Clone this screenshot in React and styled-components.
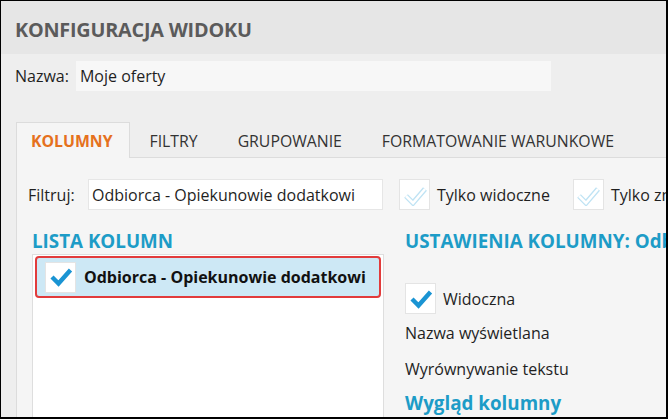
import React from "react";
import styled, { createGlobalStyle } from "styled-components";

const GlobalStyle = createGlobalStyle`
  html, body {
    margin: 0;
    padding: 0;
    background: #ffffff;
  }
  * {
    box-sizing: border-box;
  }
`;

const tabs = ["KOLUMNY", "FILTRY", "GRUPOWANIE", "FORMATOWANIE WARUNKOWE"];

const CheckMark = ({ faded }) => (
  <svg width="24" height="22" viewBox="0 0 24 22">
    {faded ? (
      <>
        <path d="M3 12 L10 19 L22 5" fill="none" stroke="#bfe3f4" strokeWidth="5.2" strokeLinejoin="miter" />
        <path d="M3 12 L10 19 L22 5" fill="none" stroke="#ffffff" strokeWidth="2.6" strokeLinejoin="miter" />
      </>
    ) : (
      <path d="M3 11 L9.5 17.5 L21.5 4" fill="none" stroke="#1a94d3" strokeWidth="4.4" strokeLinejoin="miter" />
    )}
  </svg>
);

const App = () => {
  return (
    <Frame>
      <GlobalStyle />
      <Header>
        <Title>KONFIGURACJA WIDOKU</Title>
      </Header>
      <Body>
        <NameRow>
          <Label>Nazwa:</Label>
          <NameInput>Moje oferty</NameInput>
        </NameRow>
        <TabStrip>
          {tabs.map((t, i) => (
            <Tab key={t} active={i === 0}>
              {t}
            </Tab>
          ))}
        </TabStrip>
        <Panel>
          <FilterRow>
            <FilterLabel>Filtruj:</FilterLabel>
            <FilterInput>Odbiorca - Opiekunowie dodatkowi</FilterInput>
            <CheckOption>
              <Box>
                <CheckMark faded />
              </Box>
              Tylko widoczne
            </CheckOption>
            <CheckOption>
              <Box>
                <CheckMark faded />
              </Box>
              Tylko zmienione
            </CheckOption>
          </FilterRow>
          <Columns>
            <LeftCol>
              <SectionTitle>LISTA KOLUMN</SectionTitle>
              <ListBox>
                <ListItem>
                  <Box>
                    <CheckMark />
                  </Box>
                  <ItemText>Odbiorca - Opiekunowie dodatkowi</ItemText>
                </ListItem>
              </ListBox>
            </LeftCol>
            <RightCol>
              <SectionTitle>USTAWIENIA KOLUMNY: Odbiorca</SectionTitle>
              <VisibleRow>
                <Box>
                  <CheckMark />
                </Box>
                Widoczna
              </VisibleRow>
              <FieldRow>
                <FieldLabel>Nazwa wyświetlana</FieldLabel>
                <FieldInput />
              </FieldRow>
              <FieldRow>
                <FieldLabel>Wyrównywanie tekstu</FieldLabel>
                <FieldInput />
              </FieldRow>
              <SubTitle>Wygląd kolumny</SubTitle>
            </RightCol>
          </Columns>
        </Panel>
      </Body>
    </Frame>
  );
};

const Frame = styled.div`
  width: 668px;
  height: 419px;
  overflow: hidden;
  border: 1px solid #000;
  border-right-width: 2px;
  border-bottom-width: 2px;
  background: #eeeeee;
  font-family: "Open Sans", "Noto Sans", sans-serif;
  color: #1f1f1f;
  display: flex;
  flex-direction: column;
`;

const Header = styled.div`
  height: 53px;
  flex-shrink: 0;
  background: #e6e6e6;
  display: flex;
  align-items: center;
  padding: 3px 0 0 14px;
`;

const Title = styled.h1`
  margin: 0;
  font-size: 19.8px;
  font-weight: 700;
  color: #5b5b5b;
  letter-spacing: -0.2px;
`;

const Body = styled.div`
  flex: 1;
  padding: 7px 0 0 14px;
  display: flex;
  flex-direction: column;
  min-height: 0;
`;

const NameRow = styled.div`
  display: flex;
  align-items: center;
  gap: 7px;
`;

const Label = styled.span`
  font-size: 16px;
  white-space: nowrap;
`;

const NameInput = styled.div`
  width: 475px;
  height: 30px;
  background: #f7f7f7;
  display: flex;
  align-items: center;
  padding-left: 4px;
  font-size: 16px;
`;

const TabStrip = styled.div`
  display: flex;
  align-items: flex-end;
  margin-top: 31px;
  padding-left: 1px;
`;

const Tab = styled.div`
  height: 36px;
  display: flex;
  align-items: center;
  padding: 0 19px 0 19px;
  padding-left: ${(p) => (p.active ? "14px" : "19px")};
  padding-right: ${(p) => (p.active ? "16px" : "19px")};
  font-size: 15.8px;
  white-space: nowrap;
  color: ${(p) => (p.active ? "#e5711d" : "#333")};
  font-weight: ${(p) => (p.active ? 700 : 400)};
  background: ${(p) => (p.active ? "#f5f5f5" : "transparent")};
  border: 1px solid ${(p) => (p.active ? "#dcdcdc" : "transparent")};
  border-bottom: none;
  margin-bottom: -1px;
  position: relative;
  z-index: 1;
`;

const Panel = styled.div`
  flex: 1;
  margin-left: 1px;
  background: #f5f5f5;
  border-top: 1px solid #dcdcdc;
  border-left: 1px solid #dcdcdc;
  padding: 21px 0 0 11px;
  min-height: 0;
  overflow: hidden;
`;

const FilterRow = styled.div`
  display: flex;
  align-items: center;
  white-space: nowrap;
`;

const FilterLabel = styled.span`
  width: 60px;
  flex-shrink: 0;
  font-size: 16px;
`;

const FilterInput = styled.div`
  width: 295px;
  height: 31px;
  flex-shrink: 0;
  background: #fff;
  border: 1px solid #e6e6e6;
  display: flex;
  align-items: center;
  padding-left: 3px;
  font-size: 16px;
`;

const CheckOption = styled.label`
  display: flex;
  align-items: center;
  gap: 7px;
  font-size: 16px;
  margin-left: 16px;
  margin-right: 7px;
  flex-shrink: 0;
`;

const Box = styled.span`
  width: 31px;
  height: 31px;
  flex-shrink: 0;
  background: #fff;
  border: 1px solid #e4e4e4;
  display: flex;
  align-items: center;
  justify-content: center;
`;

const Columns = styled.div`
  display: flex;
  gap: 21px;
  margin-top: 20px;
  margin-left: 4px;
`;

const LeftCol = styled.div`
  width: 352px;
  flex-shrink: 0;
  display: flex;
  flex-direction: column;
`;

const SectionTitle = styled.h2`
  margin: 0;
  font-size: 18.8px;
  font-weight: 700;
  color: #1d9cc7;
  white-space: nowrap;
  line-height: 22px;
`;

const ListBox = styled.div`
  margin-top: 2px;
  height: 200px;
  background: #fff;
  border: 1px solid #dedede;
  padding: 1px 2px;
`;

const ListItem = styled.div`
  height: 42px;
  display: flex;
  align-items: center;
  gap: 8px;
  padding-left: 8px;
  background: #cde8f5;
  border: 2px solid #e23b3b;
  border-radius: 4px;
`;

const ItemText = styled.span`
  font-size: 16px;
  font-weight: 700;
  color: #111;
  white-space: nowrap;
`;

const RightCol = styled.div`
  flex: 1;
  min-width: 0;
  display: flex;
  flex-direction: column;
`;

const VisibleRow = styled.label`
  display: flex;
  align-items: center;
  gap: 7px;
  font-size: 16px;
  margin-top: 31px;
`;

const FieldRow = styled.div`
  display: flex;
  align-items: center;
  height: 34px;
  margin-top: 2px;
`;

const FieldLabel = styled.span`
  width: 261px;
  flex-shrink: 0;
  font-size: 16px;
  white-space: nowrap;
`;

const FieldInput = styled.div`
  width: 200px;
  height: 33px;
  flex-shrink: 0;
  background: #f5f5f5;
  border: 1px solid #e2e2e2;
`;

const SubTitle = styled.h3`
  margin: 4px 0 0;
  font-size: 18.8px;
  font-weight: 700;
  color: #1d9cc7;
  white-space: nowrap;
`;

export default App;
